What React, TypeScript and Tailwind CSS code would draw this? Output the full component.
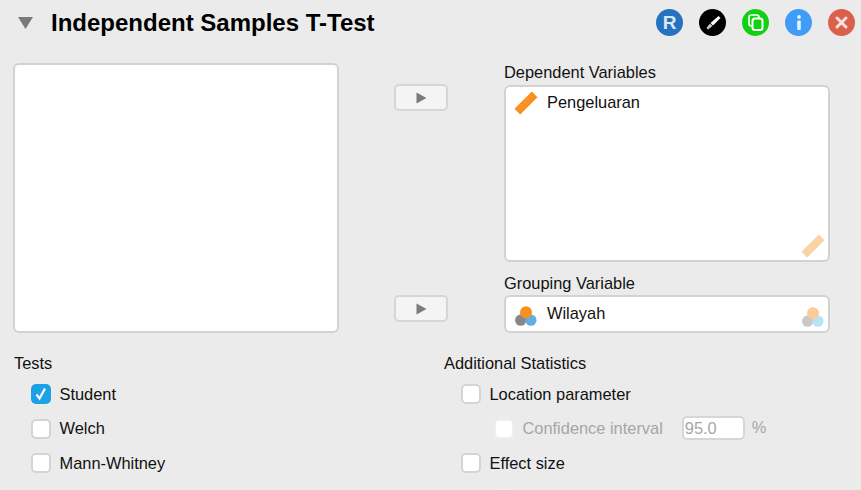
function RulerIcon({ faded }: { faded?: boolean }) {
  return (
    <svg width="24" height="24" viewBox="0 0 24 24" className={faded ? 'opacity-40' : ''}>
      <path d="M17.8 0.5 L23.5 6.2 L6.2 23.5 L0.5 17.8 Z" fill="#f7901e" />
      <path d="M16 4.5l1.5 1.5M13 7.5l1.5 1.5M10 10.5l1.5 1.5M7 13.5l1.5 1.5M4 16.5l1.5 1.5" stroke="#fba851" strokeWidth="1" />
    </svg>
  );
}

function NominalIcon({ faded }: { faded?: boolean }) {
  return (
    <svg width="22" height="22" viewBox="0 0 22 22" className={faded ? 'opacity-45' : ''}>
      <circle cx="5.7" cy="16.2" r="5.6" fill="#878787" />
      <circle cx="15.9" cy="16.2" r="5.6" fill={faded ? '#5fc4ea' : '#62aee2'} />
      <circle cx="11" cy="8.3" r="6" fill="#f7901e" />
    </svg>
  );
}

function Arrow() {
  return (
    <div className="flex h-[27px] w-[54px] items-center justify-center rounded-[5px] border-2 border-[#d6d6d6] bg-[#f4f4f4]">
      <svg width="11" height="12" viewBox="0 0 11 12">
        <path d="M0.5 0.5 L10.5 6 L0.5 11.5 Z" fill="#7b7b7b" />
      </svg>
    </div>
  );
}

function Check({ label, checked, className }: { label: string; checked?: boolean; className?: string }) {
  return (
    <div className={`flex h-[20px] items-center ${className ?? ''}`}>
      {checked ? (
        <div className="flex h-[20px] w-[20px] items-center justify-center rounded-[5px] bg-[#1ba1e6]">
          <svg width="14" height="14" viewBox="0 0 14 14">
            <path d="M2.5 7.5 L5.5 11.5 L11 1.5" fill="none" stroke="#fff" strokeWidth="2.2" />
          </svg>
        </div>
      ) : (
        <div className="h-[20px] w-[20px] rounded-[5px] border-2 border-[#d4d4d4] bg-white" />
      )}
      <span className="mb-[1px] ml-[8.5px] text-[16.4px] leading-[20px] text-[#111]">{label}</span>
    </div>
  );
}

export default function App() {
  return (
    <div className="h-[490px] w-[861px] overflow-hidden bg-[#ebebeb] font-['Liberation_Sans',Arial,sans-serif]">
      <header className="flex h-[46px] items-center pl-[18px] pr-[6px]">
        <svg width="15" height="12" viewBox="0 0 15 12">
          <path d="M0 0 H15 L7.5 12 Z" fill="#7a7a7a" />
        </svg>
        <h1 className="ml-[18px] text-[24px] font-bold leading-[28px] text-black">Independent Samples T-Test</h1>
        <div className="mb-[1px] ml-auto flex items-center gap-[16px]">
          <div className="flex h-[27px] w-[27px] items-center justify-center rounded-full bg-[#2772c0] text-[19px] font-bold leading-none text-[#dbe8f6]">R</div>
          <div className="flex h-[27px] w-[27px] items-center justify-center rounded-full bg-black">
            <svg width="16" height="16" viewBox="0 0 16 16">
              <path d="M13.5 1 L15.5 3 L8 10.5 L5.5 8 Z" fill="#fff" />
              <path d="M5 8.5 L7.5 11 L3 14.5 L1.5 13 Z" fill="#c9c9c9" />
            </svg>
          </div>
          <div className="flex h-[27px] w-[27px] items-center justify-center rounded-full bg-[#12d012]">
            <svg width="19" height="19" viewBox="0 0 19 19" fill="none" stroke="#fff" strokeWidth="1.6">
              <rect x="3" y="2" width="10" height="11" rx="2.5" />
              <rect x="6.5" y="5.5" width="10" height="11.5" rx="2.5" fill="#12d012" strokeWidth="2" />
            </svg>
          </div>
          <div className="flex h-[27px] w-[27px] items-center justify-center rounded-full bg-[#3f9cf7]">
            <svg width="8" height="15" viewBox="0 0 8 15">
              <circle cx="4" cy="2" r="1.9" fill="#e4f1ff" />
              <rect x="2.2" y="5.5" width="3.6" height="9.5" rx="1" fill="#e4f1ff" />
            </svg>
          </div>
          <div className="flex h-[27px] w-[27px] items-center justify-center rounded-full bg-[#dc5f4e]">
            <svg width="15" height="15" viewBox="0 0 15 15">
              <path d="M3 3 L12 12 M12 3 L3 12" stroke="#f6e3df" strokeWidth="3" strokeLinecap="round" />
            </svg>
          </div>
        </div>
      </header>

      <section className="mt-[17px] flex pl-[13px]">
        <div className="h-[270px] w-[326px] rounded-[6px] border-2 border-[#d2d2d2] bg-white" />
        <div className="ml-[55px] w-[54px] pt-[21px]">
          <Arrow />
          <div className="mt-[184px]">
            <Arrow />
          </div>
        </div>
        <div className="ml-[56px] w-[326px]">
          <div className="h-[22px] text-[16.4px] leading-[19px] text-[#111]">Dependent Variables</div>
          <div className="relative h-[177px] rounded-[6px] border-2 border-[#d2d2d2] bg-white pl-[8px] pt-[4px]">
            <div className="flex items-center">
              <RulerIcon />
              <span className="mb-[2px] ml-[9px] text-[16.4px] leading-[22px] text-[#111]">Pengeluaran</span>
            </div>
            <div className="absolute bottom-[2px] right-[3px]">
              <RulerIcon faded />
            </div>
          </div>
          <div className="mt-[10px] h-[23px] text-[16.4px] leading-[22px] text-[#111]">Grouping Variable</div>
          <div className="relative h-[38px] rounded-[6px] border-2 border-[#d2d2d2] bg-white pl-[9px] pt-[6px]">
            <div className="flex items-center">
              <NominalIcon />
              <span className="mb-[4px] ml-[10px] text-[16.4px] leading-[20px] text-[#111]">Wilayah</span>
            </div>
            <div className="absolute bottom-[4px] right-[4px]">
              <NominalIcon faded />
            </div>
          </div>
        </div>
      </section>

      <section className="mt-[21px] flex">
        <div className="w-[444px] pl-[14px]">
          <div className="text-[16.4px] leading-[19px] text-[#111]">Tests</div>
          <div className="mt-[11px] flex flex-col gap-[14.5px] pl-[17px]">
            <Check label="Student" checked />
            <Check label="Welch" />
            <Check label="Mann-Whitney" />
          </div>
        </div>
        <div>
          <div className="text-[16.4px] leading-[19px] text-[#111]">Additional Statistics</div>
          <div className="mt-[11px] flex flex-col gap-[14.5px] pl-[17px]">
            <Check label="Location parameter" />
            <div className="flex h-[20px] items-center pl-[33px]">
              <div className="h-[20px] w-[20px] rounded-[5px] border-2 border-[#efefef] bg-white" />
              <span className="mb-[1px] ml-[8.5px] text-[16.4px] leading-[20px] text-[#a6a6a6]">Confidence interval</span>
              <div className="mb-[1px] ml-[19px] h-[24px] w-[63px] rounded-[5px] border-2 border-[#d6d6d6] bg-white pl-[1px] text-[16.4px] leading-[20px] text-[#a6a6a6]">95.0</div>
              <span className="mb-[2px] ml-[7px] text-[16.4px] text-[#a6a6a6]">%</span>
            </div>
            <Check label="Effect size" />
            <div className="pl-[33px]">
              <div className="h-[20px] w-[20px] rounded-full border-2 border-[#efefef] bg-white" />
            </div>
          </div>
        </div>
      </section>
    </div>
  );
}
